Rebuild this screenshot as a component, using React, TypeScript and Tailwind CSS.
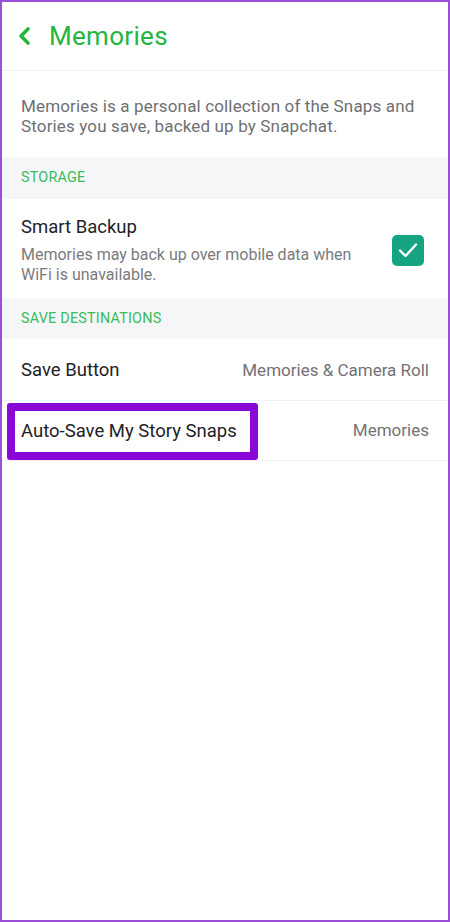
import React from "react";

export default function App() {
  return (
    <div
      className="w-[450px] h-[922px] border-2 border-[#9b50dc] bg-white overflow-hidden"
      style={{ fontFamily: "Roboto, 'Noto Sans', sans-serif" }}
    >
      {/* Header */}
      <div className="h-[69px] flex items-center border-b border-[#f0f0f2]">
        <svg width="14" height="20" viewBox="0 0 14 20" className="ml-[15px]">
          <polyline
            points="11,3 4,10 11,17"
            fill="none"
            stroke="#27b53f"
            strokeWidth="3.6"
            strokeLinecap="round"
            strokeLinejoin="round"
          />
        </svg>
        <span className="ml-[18px] text-[26px] leading-none text-[#27b53f] tracking-[0.3px]">
          Memories
        </span>
      </div>

      {/* Description */}
      <div className="px-[19px] pt-[25px] pb-[21px] text-[17px] leading-[20px] text-[#6f6f73] tracking-[0.15px]">
        Memories is a personal collection of the Snaps and Stories you save, backed up by Snapchat.
      </div>

      {/* Storage header */}
      <div className="h-[42px] flex items-center px-[19px] bg-[#f5f6f8] text-[14.4px] text-[#3bbb58] tracking-[0.2px]">
        STORAGE
      </div>

      {/* Smart Backup */}
      <div className="h-[99px] flex items-center pl-[19px] pr-[24px] pt-[3px]">
        <div className="flex-1">
          <div className="text-[18.5px] leading-[24px] text-[#222226]">Smart Backup</div>
          <div className="mt-[6px] text-[16px] leading-[20px] text-[#7a7a7e]">
            Memories may back up over mobile data when
            <br />
            WiFi is unavailable.
          </div>
        </div>
        <div className="w-[32px] h-[31px] rounded-[5px] bg-[#16a382] flex items-center justify-center">
          <svg width="22" height="18" viewBox="0 0 22 18">
            <polyline
              points="3,9.5 8.5,15 19,3.5"
              fill="none"
              stroke="white"
              strokeWidth="2.4"
              strokeLinecap="round"
              strokeLinejoin="round"
            />
          </svg>
        </div>
      </div>

      {/* Save Destinations header */}
      <div className="h-[41px] flex items-center px-[19px] bg-[#f5f6f8] text-[14.4px] text-[#3bbb58] tracking-[0.2px]">
        SAVE DESTINATIONS
      </div>

      {/* Save Button */}
      <div className="h-[62px] flex items-center justify-between px-[19px] pt-[2px] border-b border-[#f0f0f2]">
        <span className="text-[18.5px] text-[#222226]">Save Button</span>
        <span className="text-[17px] text-[#727276]">Memories &amp; Camera Roll</span>
      </div>

      {/* Auto-Save */}
      <div className="h-[60px] flex items-center justify-between pr-[19px] border-b border-[#f0f0f2]">
        <span className="ml-[5px] mt-[2px] h-[57px] w-[251px] flex items-center pl-[6px] border-[8px] border-[#8a08d6] rounded-[3px] text-[18.5px] text-[#222226]">
          Auto-Save My Story Snaps
        </span>
        <span className="text-[17px] text-[#727276]">Memories</span>
      </div>
    </div>
  );
}
